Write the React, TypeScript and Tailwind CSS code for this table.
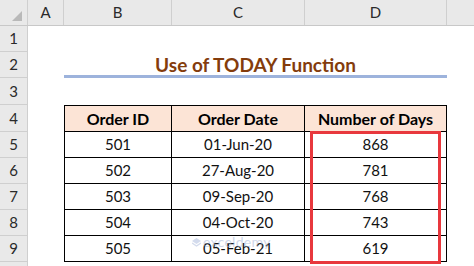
import React from 'react'

const rows = [
  { id: '501', date: '01-Jun-20', days: '868' },
  { id: '502', date: '27-Aug-20', days: '781' },
  { id: '503', date: '09-Sep-20', days: '768' },
  { id: '504', date: '04-Oct-20', days: '743' },
  { id: '505', date: '05-Feb-21', days: '619' },
]

const heights = ['h-[26px]', 'h-[26px]', 'h-[27px]', 'h-[27px]', 'h-[26px]', 'h-[26px]', 'h-[26px]', 'h-[26px]', 'h-[26px]', 'h-[26px]']

function RowHead({ n, h }: { n: number; h: string }) {
  return (
    <div className={`${h} w-[28px] shrink-0 flex items-center justify-center bg-[#e9e9e9] border-r border-b border-[#cfcfcf] text-[15px] text-[#2a2a2a]`}>
      {n < 10 ? n : ''}
    </div>
  )
}

export default function App() {
  return (
    <div className="relative w-[474px] h-[266px] overflow-hidden bg-white font-['Lato','Open_Sans',sans-serif] text-black">
      {/* column headers */}
      <div className="flex h-[26px] bg-[#e9e9e9] border-b border-[#c8c8c8] text-[15px] text-[#2a2a2a]">
        <div className="w-[28px] relative border-r border-[#cfcfcf]">
          <div className="absolute right-[5px] bottom-[4px] w-0 h-0 border-l-[10px] border-l-transparent border-b-[10px] border-b-[#b9b9b9]" />
        </div>
        <div className="w-[36px] flex items-center justify-center border-r border-[#cfcfcf]">A</div>
        <div className="w-[108px] flex items-center justify-center border-r border-[#cfcfcf]">B</div>
        <div className="w-[133px] flex items-center justify-center border-r border-[#cfcfcf]">C</div>
        <div className="w-[142px] flex items-center justify-center border-r border-[#cfcfcf]">D</div>
        <div className="flex-1" />
      </div>

      {heights.map((h, i) => {
        const n = i + 1
        const data = n >= 5 && n <= 9 ? rows[n - 5] : null
        return (
          <div key={n} className="flex">
            <RowHead n={n} h={h} />
            <div className={`${h} w-[36px]`} />
            {n === 2 && (
              <div className={`${h} w-[383px] flex items-center justify-center border-b-[3px] border-[#9db3dc] pt-[3px] text-[19px] font-bold text-[#843c0c]`}>
                Use of TODAY Function
              </div>
            )}
            {n === 4 && (
              <div className={`${h} flex bg-[#fce4d6] border border-black text-[16px] font-bold`}>
                <div className="w-[107px] flex items-center justify-center border-r border-black">Order ID</div>
                <div className="w-[133px] flex items-center justify-center border-r border-black">Order Date</div>
                <div className="w-[141px] flex items-center justify-center">Number of Days</div>
              </div>
            )}
            {data && (
              <div className={`${h} flex border-x border-b border-black text-[15px] text-[#111]`}>
                <div className="w-[107px] flex items-center justify-center border-r border-black">{data.id}</div>
                <div className="w-[133px] flex items-center justify-center border-r border-black">{data.date}</div>
                <div className="w-[141px] flex items-center justify-center">{data.days}</div>
              </div>
            )}
          </div>
        )
      })}

      {/* highlight box */}
      <div className="absolute left-[310px] top-[131px] w-[131px] h-[133px] border-[3px] border-[#e8383d]" />

      {/* watermark */}
      <div className="absolute left-[192px] top-[235px] flex items-center gap-[2px] opacity-50 text-[#9fb2d8]">
        <svg width="9" height="10" viewBox="0 0 9 10">
          <path d="M0 4 L4.5 1 L9 4 L4.5 7 Z" fill="#a9b9dc" />
          <path d="M0 6 L4.5 9 L9 6" stroke="#a9b9dc" strokeWidth="1.4" fill="none" />
        </svg>
        <span className="text-[14px] leading-none tracking-[0.3px]">exceldemy</span>
      </div>
    </div>
  )
}
